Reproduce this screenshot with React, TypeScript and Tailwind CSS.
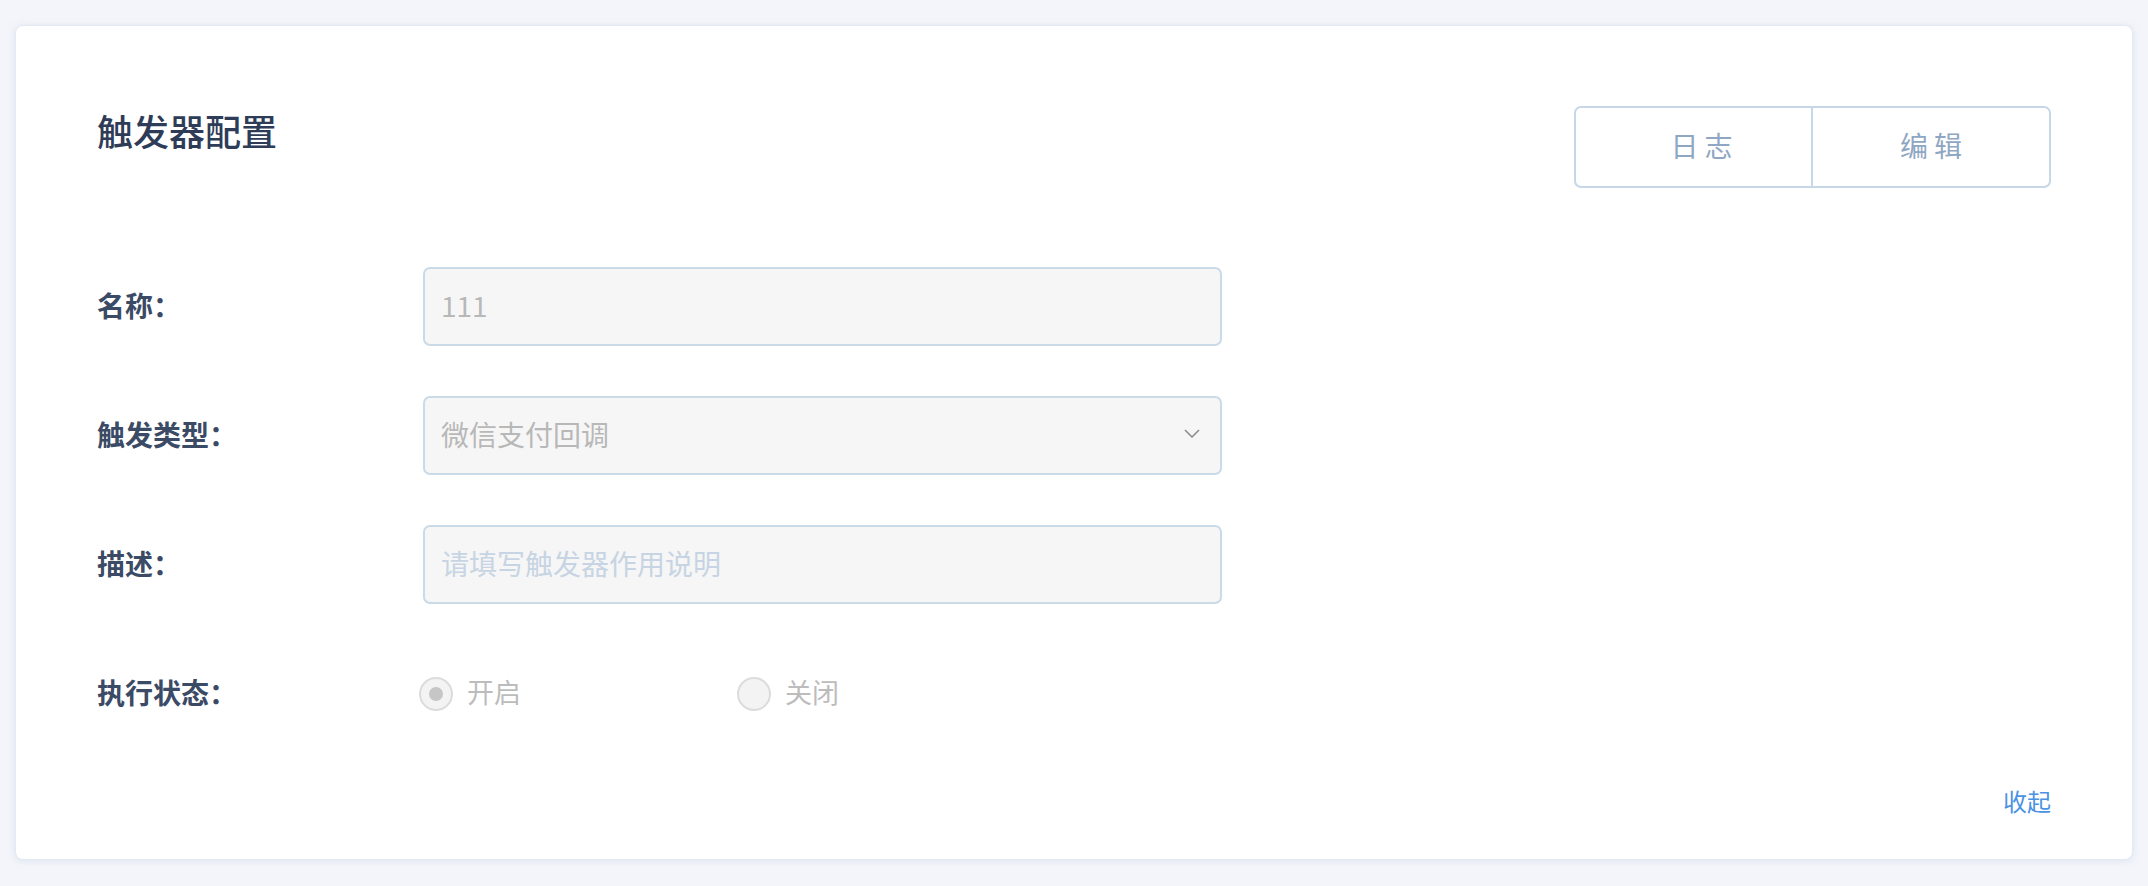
const font = { fontFamily: '"Noto Sans CJK SC", "Noto Sans", sans-serif' };

function Field({ label, children }: { label: string; children: React.ReactNode }) {
  return (
    <div className="flex items-center h-[79px]">
      <div className="w-[326px] shrink-0 pb-[4px] text-[28px] font-bold text-[#3b4a65]">{label}</div>
      {children}
    </div>
  );
}

function Radio({ label, checked }: { label: string; checked?: boolean }) {
  return (
    <div className="flex items-center gap-[14px]">
      <span className="w-[34px] h-[34px] rounded-full border-2 border-[#dcdcdc] bg-[#f3f3f3] flex items-center justify-center">
        {checked && <span className="w-[14px] h-[14px] rounded-full bg-[#c6c6c6]" />}
      </span>
      <span className="pb-[2px] text-[27px] text-[#bcbcbc]">{label}</span>
    </div>
  );
}

export default function App() {
  return (
    <div className="min-h-screen bg-[#f3f5fa] pt-[25px] px-[15px]" style={font}>
      <div className="bg-white rounded-[8px] border border-[#e4eaf3] shadow-[0_1px_6px_rgba(200,212,232,0.5)] pt-[80px] pb-[43px] px-[81px]">
        <div className="flex justify-between items-start">
          <h1 className="mt-[4px] text-[36px] leading-[40px] font-medium text-[#2e3c58]">触发器配置</h1>
          <div className="flex h-[82px] border-2 border-[#c6d7e8] rounded-[7px]">
            <button className="w-[237px] pb-[4px] text-[28px] tracking-[6px] pl-[22px] text-[#8fa7c3] border-r-2 border-[#c6d7e8]">日志</button>
            <button className="w-[236px] pb-[4px] text-[28px] tracking-[6px] pl-[6px] text-[#8fa7c3]">编辑</button>
          </div>
        </div>

        <div className="mt-[79px] flex flex-col gap-[50px]">
          <Field label="名称：">
            <div className="w-[799px] h-full flex items-center px-[16px] pb-[4px] bg-[#f6f6f6] border-2 border-[#c9dae9] rounded-[7px] text-[28px] text-[#b8b8b8]">
              111
            </div>
          </Field>
          <Field label="触发类型：">
            <div className="w-[799px] h-full flex items-center justify-between pl-[16px] pr-[20px] pb-[4px] bg-[#f6f6f6] border-2 border-[#c9dae9] rounded-[7px] text-[28px] text-[#b8b8b8]">
              <span>微信支付回调</span>
              <svg width="16" height="9" viewBox="0 0 16 9" fill="none">
                <polyline points="1,1 8,8 15,1" stroke="#8a8a8a" strokeWidth="1.5" />
              </svg>
            </div>
          </Field>
          <Field label="描述：">
            <div className="w-[799px] h-full flex items-center px-[16px] pb-[4px] bg-[#f6f6f6] border-2 border-[#c9dae9] rounded-[7px] text-[28px] text-[#c6d4e3]">
              请填写触发器作用说明
            </div>
          </Field>
          <Field label="执行状态：">
            <div className="flex items-center -ml-[4px]">
              <div className="w-[318px]">
                <Radio label="开启" checked />
              </div>
              <Radio label="关闭" />
            </div>
          </Field>
        </div>

        <div className="mt-[53px] flex justify-end">
          <span className="text-[24px] leading-[30px] text-[#4a92e3]">收起</span>
        </div>
      </div>
    </div>
  );
}
